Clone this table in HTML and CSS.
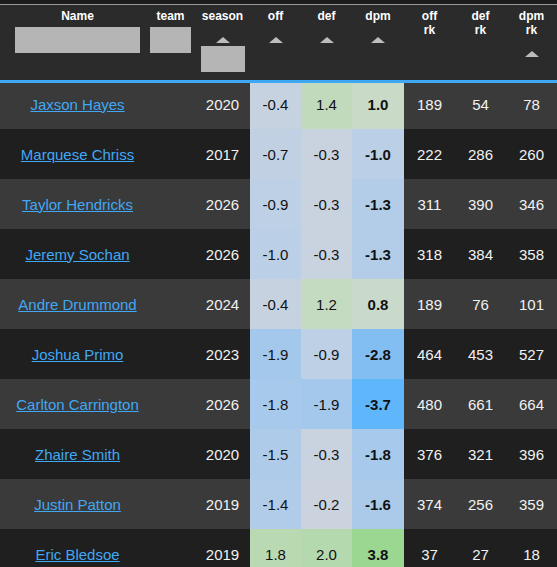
FILE: index.html
```html
<!DOCTYPE html>
<html>
<head>
    <meta charset="UTF-8">
    <meta name="viewport" content="width=device-width, initial-scale=1.0">
    <title>Player DPM</title>
    <link rel="stylesheet" href="styles.css">
</head>
<body>
    <div class="topbar"></div>
    <div class="table">
        <div class="head grid">
            <div class="th th-name">
                <span class="label">Name</span>
                <input class="filter filter-name" type="text">
            </div>
            <div class="th th-team">
                <span class="label">team</span>
                <input class="filter filter-team" type="text">
            </div>
            <div class="th">
                <span class="label">season</span>
                <span class="sort"></span>
                <input class="filter filter-season" type="text">
            </div>
            <div class="th">
                <span class="label">off</span>
                <span class="sort"></span>
            </div>
            <div class="th">
                <span class="label">def</span>
                <span class="sort"></span>
            </div>
            <div class="th">
                <span class="label">dpm</span>
                <span class="sort"></span>
            </div>
            <div class="th">
                <span class="label">off<br>rk</span>
            </div>
            <div class="th">
                <span class="label">def<br>rk</span>
            </div>
            <div class="th">
                <span class="label">dpm<br>rk</span>
                <span class="sort"></span>
            </div>
        </div>

        <div class="rows">
            <div class="row grid">
                <div class="td td-name"><a href="#">Jaxson Hayes</a></div>
                <div class="td td-team"></div>
                <div class="td">2020</div>
                <div class="td stat" data-v="-0.4">-0.4</div>
                <div class="td stat" data-v="1.4">1.4</div>
                <div class="td stat dpm" data-v="1.0">1.0</div>
                <div class="td">189</div>
                <div class="td">54</div>
                <div class="td">78</div>
            </div>
            <div class="row grid">
                <div class="td td-name"><a href="#">Marquese Chriss</a></div>
                <div class="td td-team"></div>
                <div class="td">2017</div>
                <div class="td stat" data-v="-0.7">-0.7</div>
                <div class="td stat" data-v="-0.3">-0.3</div>
                <div class="td stat dpm" data-v="-1.0">-1.0</div>
                <div class="td">222</div>
                <div class="td">286</div>
                <div class="td">260</div>
            </div>
            <div class="row grid">
                <div class="td td-name"><a href="#">Taylor Hendricks</a></div>
                <div class="td td-team"></div>
                <div class="td">2026</div>
                <div class="td stat" data-v="-0.9">-0.9</div>
                <div class="td stat" data-v="-0.3">-0.3</div>
                <div class="td stat dpm" data-v="-1.3">-1.3</div>
                <div class="td">311</div>
                <div class="td">390</div>
                <div class="td">346</div>
            </div>
            <div class="row grid">
                <div class="td td-name"><a href="#">Jeremy Sochan</a></div>
                <div class="td td-team"></div>
                <div class="td">2026</div>
                <div class="td stat" data-v="-1.0">-1.0</div>
                <div class="td stat" data-v="-0.3">-0.3</div>
                <div class="td stat dpm" data-v="-1.3">-1.3</div>
                <div class="td">318</div>
                <div class="td">384</div>
                <div class="td">358</div>
            </div>
            <div class="row grid">
                <div class="td td-name"><a href="#">Andre Drummond</a></div>
                <div class="td td-team"></div>
                <div class="td">2024</div>
                <div class="td stat" data-v="-0.4">-0.4</div>
                <div class="td stat" data-v="1.2">1.2</div>
                <div class="td stat dpm" data-v="0.8">0.8</div>
                <div class="td">189</div>
                <div class="td">76</div>
                <div class="td">101</div>
            </div>
            <div class="row grid">
                <div class="td td-name"><a href="#">Joshua Primo</a></div>
                <div class="td td-team"></div>
                <div class="td">2023</div>
                <div class="td stat" data-v="-1.9">-1.9</div>
                <div class="td stat" data-v="-0.9">-0.9</div>
                <div class="td stat dpm" data-v="-2.8">-2.8</div>
                <div class="td">464</div>
                <div class="td">453</div>
                <div class="td">527</div>
            </div>
            <div class="row grid">
                <div class="td td-name"><a href="#">Carlton Carrington</a></div>
                <div class="td td-team"></div>
                <div class="td">2026</div>
                <div class="td stat" data-v="-1.8">-1.8</div>
                <div class="td stat" data-v="-1.9">-1.9</div>
                <div class="td stat dpm" data-v="-3.7">-3.7</div>
                <div class="td">480</div>
                <div class="td">661</div>
                <div class="td">664</div>
            </div>
            <div class="row grid">
                <div class="td td-name"><a href="#">Zhaire Smith</a></div>
                <div class="td td-team"></div>
                <div class="td">2020</div>
                <div class="td stat" data-v="-1.5">-1.5</div>
                <div class="td stat" data-v="-0.3">-0.3</div>
                <div class="td stat dpm" data-v="-1.8">-1.8</div>
                <div class="td">376</div>
                <div class="td">321</div>
                <div class="td">396</div>
            </div>
            <div class="row grid">
                <div class="td td-name"><a href="#">Justin Patton</a></div>
                <div class="td td-team"></div>
                <div class="td">2019</div>
                <div class="td stat" data-v="-1.4">-1.4</div>
                <div class="td stat" data-v="-0.2">-0.2</div>
                <div class="td stat dpm" data-v="-1.6">-1.6</div>
                <div class="td">374</div>
                <div class="td">256</div>
                <div class="td">359</div>
            </div>
            <div class="row grid">
                <div class="td td-name"><a href="#">Eric Bledsoe</a></div>
                <div class="td td-team"></div>
                <div class="td">2019</div>
                <div class="td stat" data-v="1.8">1.8</div>
                <div class="td stat" data-v="2.0">2.0</div>
                <div class="td stat dpm" data-v="3.8">3.8</div>
                <div class="td">37</div>
                <div class="td">27</div>
                <div class="td">18</div>
            </div>
        </div>
    </div>

    <script>
        // grey at 0, blue for negative, green for positive
        const negStops = [
            [0, [207, 212, 220]],
            [1, [187, 207, 230]],
            [2, [161, 199, 237]],
            [3, [124, 188, 244]],
            [3.7, [96, 182, 250]]
        ];
        const posStops = [
            [0, [207, 212, 220]],
            [1, [201, 219, 198]],
            [2, [181, 217, 174]],
            [3.8, [156, 215, 146]]
        ];

        function scaleColor(v) {
            const stops = v < 0 ? negStops : posStops;
            const a = Math.min(Math.abs(v), stops[stops.length - 1][0]);
            for (let i = 1; i < stops.length; i++) {
                const [x0, c0] = stops[i - 1];
                const [x1, c1] = stops[i];
                if (a <= x1) {
                    const t = (a - x0) / (x1 - x0);
                    const c = c0.map((ch, k) => Math.round(ch + (c1[k] - ch) * t));
                    return `rgb(${c.join(',')})`;
                }
            }
            const last = stops[stops.length - 1][1];
            return `rgb(${last.join(',')})`;
        }

        document.querySelectorAll('.stat').forEach(cell => {
            cell.style.background = scaleColor(parseFloat(cell.dataset.v));
        });
    </script>
</body>
</html>
```

FILE: styles.css
```css
* {
    box-sizing: border-box;
}

html, body {
    overflow: hidden;
}

body {
    margin: 0;
    font-family: "Liberation Sans", Arial, sans-serif;
    background: #1f1f1f;
    color: #f2f2f2;
}

.topbar {
    height: 5px;
    background: #1c1c1c;
    border-bottom: 1px solid #9a9a9a;
}

.grid {
    display: grid;
    grid-template-columns: 150px 45px 55px 51px 51px 52px 51px 51px 51px;
}

/* header */
.head {
    position: relative;
    z-index: 1;
    height: 78px;
    background: #2b2b2b;
    border-bottom: 3px solid #3ea8f5;
}

.th {
    display: flex;
    flex-direction: column;
    align-items: center;
    padding-top: 4px;
    font-size: 12px;
    font-weight: bold;
    color: #fff;
}

.th-name {
    padding-left: 10px;
    padding-right: 5px;
}

.th-team {
    padding-right: 4px;
}

.label {
    line-height: 14px;
    text-align: center;
}

.sort {
    margin-top: 14px;
    width: 0;
    height: 0;
    border-left: 7px solid transparent;
    border-right: 7px solid transparent;
    border-bottom: 6px solid #bdbdbd;
}

.filter {
    height: 26px;
    margin-top: 4px;
    border: none;
    background: #b5b5b5;
    padding: 0;
}

.filter-name {
    width: 125px;
}

.filter-team {
    width: 41px;
}

.filter-season {
    width: 44px;
    margin-top: 3px;
}

.rows {
    margin-top: -4px;
}

.row {
    height: 50px;
    font-size: 15px;
}

.row:nth-child(odd) {
    background: #3a3a3a;
}

.row:nth-child(even) {
    background: #1f1f1f;
}

.td {
    display: flex;
    align-items: center;
    justify-content: center;
}

.td-name {
    padding-left: 10px;
    padding-right: 5px;
}

.td-name a {
    color: #40a8f4;
    text-decoration: underline;
    white-space: nowrap;
}

.stat {
    color: #111;
}

.dpm {
    font-weight: bold;
}
```
